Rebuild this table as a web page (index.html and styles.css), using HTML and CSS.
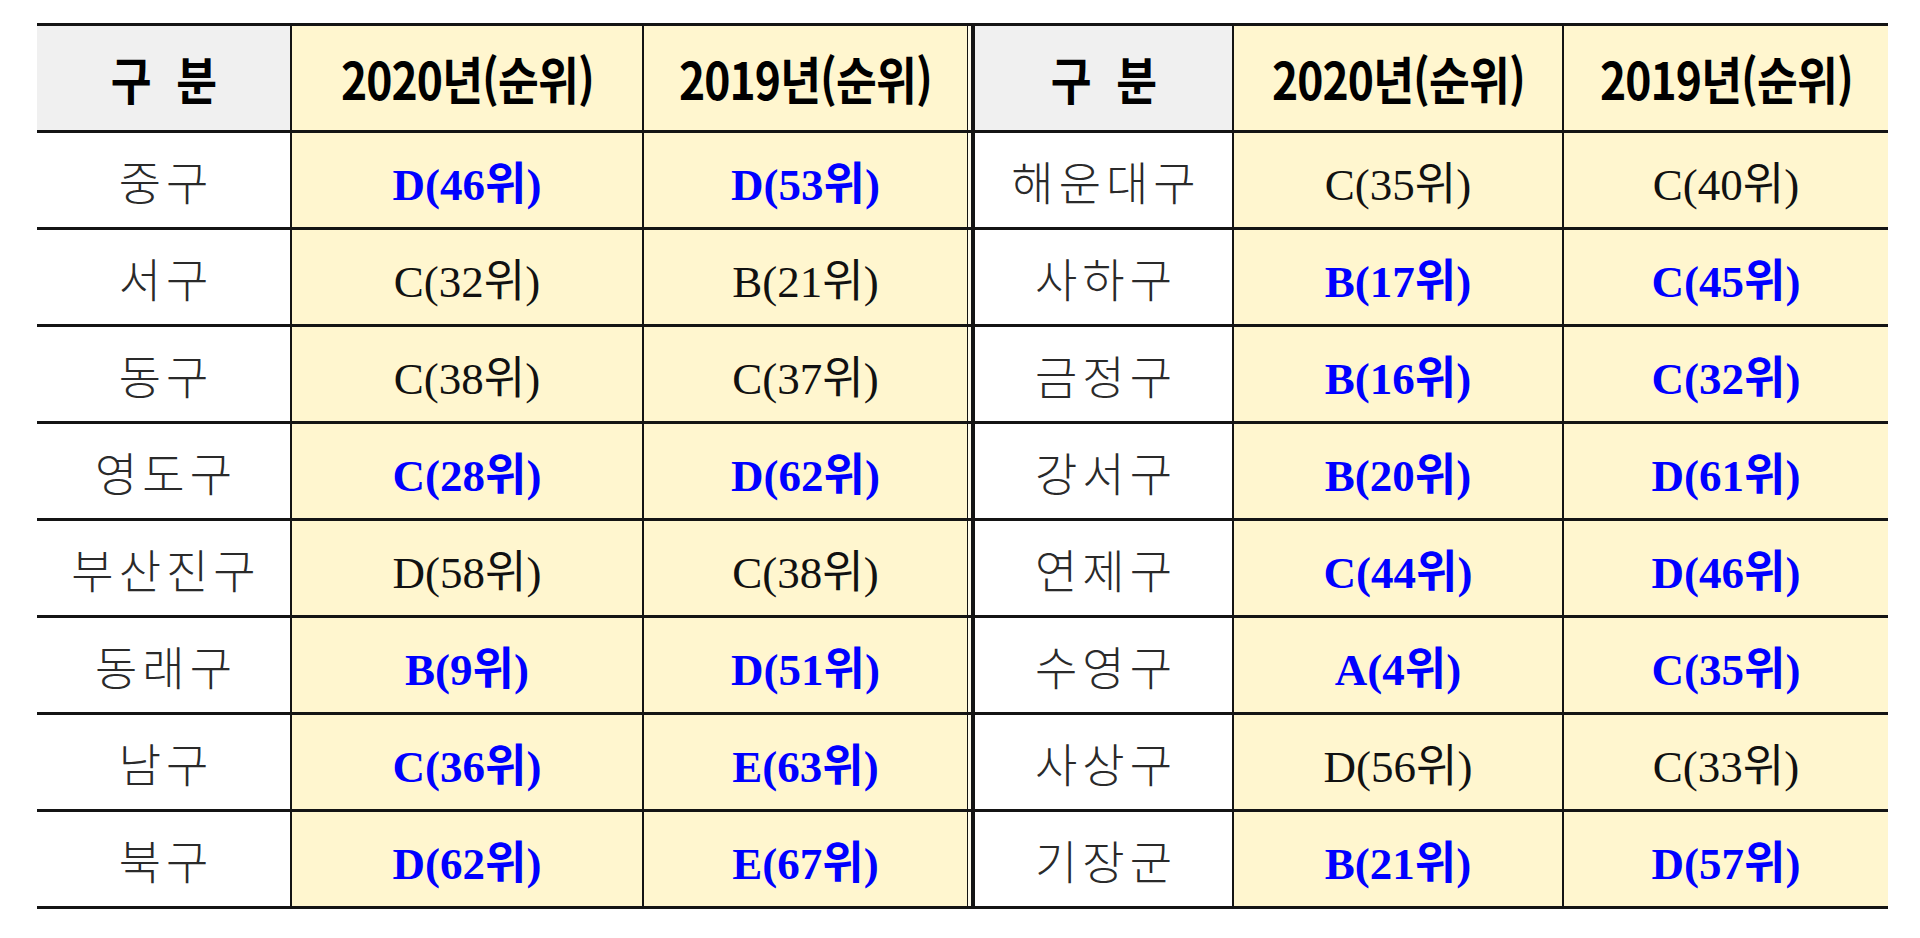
FILE: index.html
```html
<!DOCTYPE html>
<html lang="ko">
<head>
<meta charset="utf-8">
<title>구별 순위</title>
<link rel="stylesheet" href="styles.css">
</head>
<body>
<div class="page">
  <div class="grid">
    <div class="cell head gray"><span class="ht sp">구 분</span></div>
    <div class="cell head yellow bl"><span class="ht">2020년(순위)</span></div>
    <div class="cell head yellow bl br"><span class="ht">2019년(순위)</span></div>
    <div class="cell gap"></div>
    <div class="cell head gray blt"><span class="ht sp">구 분</span></div>
    <div class="cell head yellow bl"><span class="ht">2020년(순위)</span></div>
    <div class="cell head yellow bl"><span class="ht">2019년(순위)</span></div>

    <div class="cell name">중구</div>
    <div class="cell val bl hi">D(46위)</div>
    <div class="cell val bl br hi">D(53위)</div>
    <div class="cell gap"></div>
    <div class="cell name blt">해운대구</div>
    <div class="cell val bl">C(35위)</div>
    <div class="cell val bl">C(40위)</div>

    <div class="cell name">서구</div>
    <div class="cell val bl">C(32위)</div>
    <div class="cell val bl br">B(21위)</div>
    <div class="cell gap"></div>
    <div class="cell name blt">사하구</div>
    <div class="cell val bl hi">B(17위)</div>
    <div class="cell val bl hi">C(45위)</div>

    <div class="cell name">동구</div>
    <div class="cell val bl">C(38위)</div>
    <div class="cell val bl br">C(37위)</div>
    <div class="cell gap"></div>
    <div class="cell name blt">금정구</div>
    <div class="cell val bl hi">B(16위)</div>
    <div class="cell val bl hi">C(32위)</div>

    <div class="cell name">영도구</div>
    <div class="cell val bl hi">C(28위)</div>
    <div class="cell val bl br hi">D(62위)</div>
    <div class="cell gap"></div>
    <div class="cell name blt">강서구</div>
    <div class="cell val bl hi">B(20위)</div>
    <div class="cell val bl hi">D(61위)</div>

    <div class="cell name">부산진구</div>
    <div class="cell val bl">D(58위)</div>
    <div class="cell val bl br">C(38위)</div>
    <div class="cell gap"></div>
    <div class="cell name blt">연제구</div>
    <div class="cell val bl hi">C(44위)</div>
    <div class="cell val bl hi">D(46위)</div>

    <div class="cell name">동래구</div>
    <div class="cell val bl hi">B(9위)</div>
    <div class="cell val bl br hi">D(51위)</div>
    <div class="cell gap"></div>
    <div class="cell name blt">수영구</div>
    <div class="cell val bl hi">A(4위)</div>
    <div class="cell val bl hi">C(35위)</div>

    <div class="cell name">남구</div>
    <div class="cell val bl hi">C(36위)</div>
    <div class="cell val bl br hi">E(63위)</div>
    <div class="cell gap"></div>
    <div class="cell name blt">사상구</div>
    <div class="cell val bl">D(56위)</div>
    <div class="cell val bl">C(33위)</div>

    <div class="cell name">북구</div>
    <div class="cell val bl hi">D(62위)</div>
    <div class="cell val bl br hi">E(67위)</div>
    <div class="cell gap"></div>
    <div class="cell name blt">기장군</div>
    <div class="cell val bl hi">B(21위)</div>
    <div class="cell val bl hi">D(57위)</div>
  </div>
</div>
</body>
</html>
```

FILE: styles.css
```css
html, body {
  margin: 0;
  padding: 0;
  background: #ffffff;
}

.page {
  padding: 23px 0 0 37px;
}

.grid {
  display: grid;
  width: 1851px;
  grid-template-columns: 253px 352px 326px 3px 261px 330px 326px;
  grid-template-rows: 107px repeat(8, 97px);
  border-top: 3px solid #141414;
}

.cell {
  box-sizing: border-box;
  border-bottom: 3px solid #141414;
  display: flex;
  align-items: center;
  justify-content: center;
  white-space: nowrap;
  overflow: hidden;
}

.bl {
  border-left: 2px solid #141414;
}

.br {
  border-right: 1px solid #141414;
}

.blt {
  border-left: 4px solid #141414;
}

.gap {
  background: #fffbea;
}

.gray {
  background: #f0f0f0;
}

.yellow,
.val {
  background: #fff6cf;
}

.name {
  background: #ffffff;
  font-family: "Noto Sans CJK KR", "Noto Sans", sans-serif;
  font-weight: 300;
  font-size: 46px;
  letter-spacing: 5px;
  padding-left: 5px;
  color: #2a2a2a;
}

.head {
  font-family: "Noto Sans CJK KR", "Noto Sans", sans-serif;
  font-weight: 700;
  color: #000000;
}

.ht {
  display: inline-block;
  font-size: 51px;
  letter-spacing: -1px;
  transform: scaleX(0.87);
}

.sp {
  word-spacing: 16px;
}

.val {
  font-family: "Liberation Serif", "Noto Sans CJK KR", serif;
  font-size: 45px;
  color: #111111;
}

.hi {
  color: #0000ff;
  font-weight: 700;
}
```
